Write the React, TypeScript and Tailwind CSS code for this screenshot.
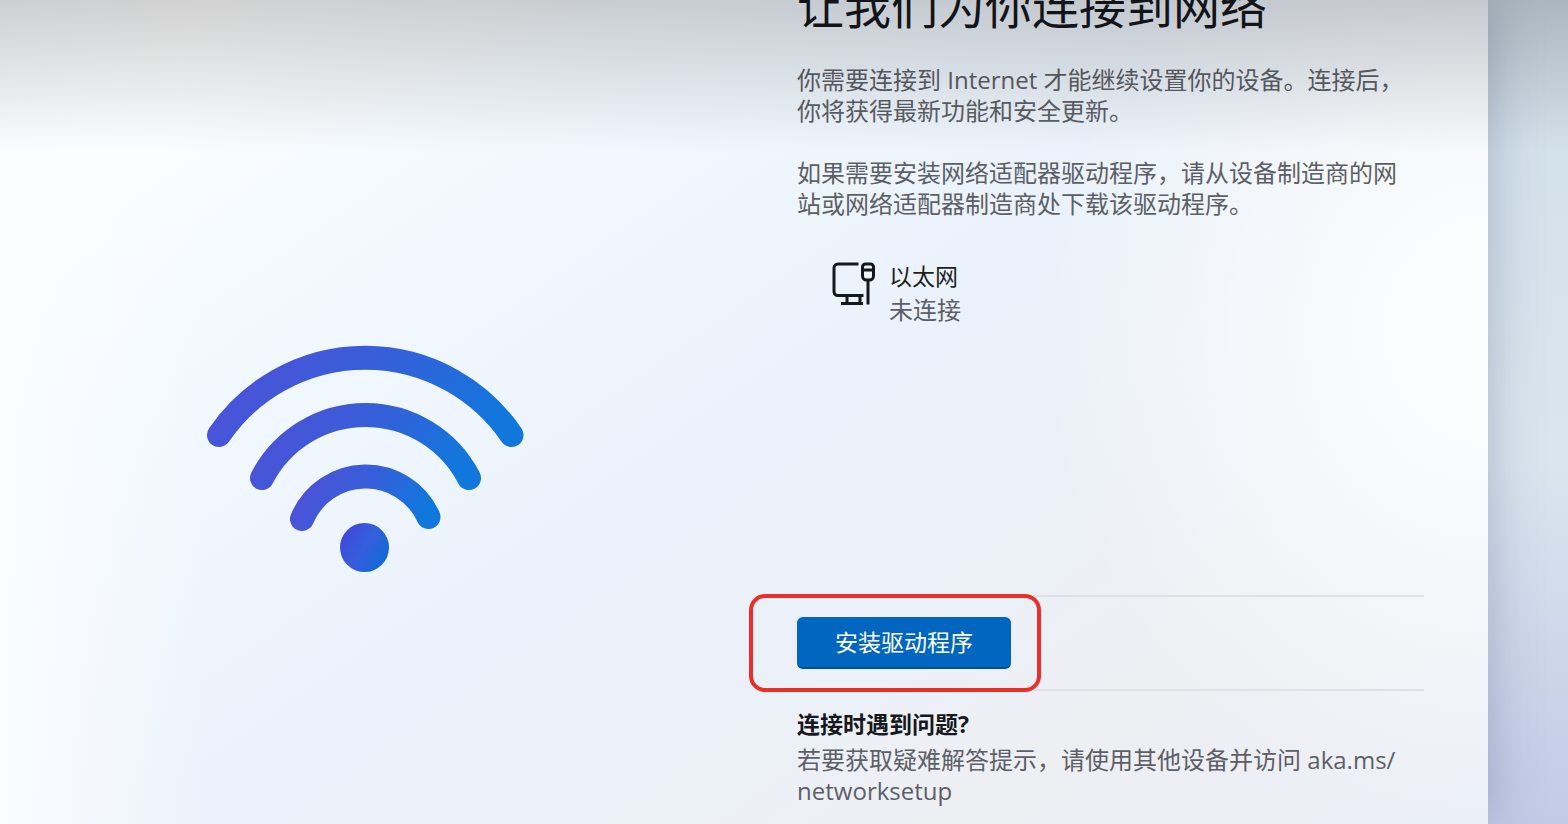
import React from "react";

const WifiLogo: React.FC = () => (
    <svg className="w-80" viewBox="205 345 320 228" fill="none" aria-hidden="true">
        <defs>
            <linearGradient id="arc" x1="0" y1="0.4" x2="1" y2="0.6">
                <stop offset="0" stopColor="#4c52d8" />
                <stop offset="0.5" stopColor="#3460da" />
                <stop offset="1" stopColor="#1077dc" />
            </linearGradient>
            <linearGradient id="dot" x1="0" y1="0.2" x2="1" y2="0.8">
                <stop offset="0" stopColor="#3f48d8" />
                <stop offset="0.5" stopColor="#355edb" />
                <stop offset="1" stopColor="#0a6cd8" />
            </linearGradient>
        </defs>
        <g stroke="url(#arc)" strokeWidth="24" strokeLinecap="round">
            <path d="M219 435A177 177 0 0 1 511.500 435" />
            <path d="M262 478A116.500 116.500 0 0 1 469 478" />
            <path d="M302 519A69 69 0 0 1 428.500 517" />
        </g>
        <circle cx="364.500" cy="547.500" r="24.500" fill="url(#dot)" />
    </svg>
);

const EthernetIcon: React.FC = () => (
    <svg className="size-[46px] shrink-0" viewBox="0 0 46 46" fill="none" stroke="#14171c" strokeWidth="3" aria-hidden="true">
        <path d="M27.500 4H7a4 4 0 0 0-4 4V31.500a4 4 0 0 0 4 4H32.500" />
        <path d="M16 35.500v8M29 35.500v8M10 43.500H32" />
        <path d="M31.500 7a3 3 0 0 1 3-3h5a3 3 0 0 1 3 3v9a4 4 0 0 1-4 4h-3a4 4 0 0 1-4-4z" />
        <path d="M31.500 10h11M37 20V44.500" />
    </svg>
);

const App: React.FC = () => {
    return (
        <div className="relative flex min-h-screen overflow-hidden bg-gradient-to-b from-[#d0dfe9] via-[#dae6ef] via-55% to-[#c2cae6] pr-20 font-['Open_Sans','Noto_Sans_CJK_SC',sans-serif] text-2xl/[31px] text-[#5c6066]">
            <main className="grid flex-1 grid-cols-[49fr_51fr] bg-[radial-gradient(ellipse_30%_60%_at_100%_40%,#fafcfd_20%,transparent),linear-gradient(to_right,#fafcff,transparent_14%),linear-gradient(145deg,#ffffff_8%,#f2f9ff_26%,#ebf2fb_50%,#ecf0f7_70%,#eeeff3_80%,#ebeff8)] shadow-[0_0_48px_rgba(70,90,120,0.35)]">
                <div className="flex items-center justify-center pt-[94px]">
                    <WifiLogo />
                </div>

                <section className="-mt-6 flex flex-col pr-16 pb-[18px] pl-17">
                    <h1 className="text-[47px]/[60px] text-[#16181c]">让我们为你连接到网络</h1>
                    <p className="mt-7 pr-3">你需要连接到 Internet 才能继续设置你的设备。连接后，你将获得最新功能和安全更新。</p>
                    <p className="mt-[31px] pr-3">如果需要安装网络适配器驱动程序，请从设备制造商的网站或网络适配器制造商处下载该驱动程序。</p>

                    <div className="mt-[41px] flex gap-3 pl-[34px]">
                        <EthernetIcon />
                        <div>
                            <h2 className="text-[23px]/[33px] text-[#1c1f24]">以太网</h2>
                            <p className="leading-[33px]">未连接</p>
                        </div>
                    </div>

                    <div className="mt-auto border-y-2 border-[#dfe1e7] py-5">
                        <div className="relative w-fit">
                            <button
                                type="button"
                                className="h-[52px] w-[214px] rounded-md border-b-2 border-[#00509f] bg-[#0066c0] text-[23px] text-white"
                            >
                                安装驱动程序
                            </button>
                            <div className="pointer-events-none absolute -inset-y-[23px] -right-[30px] -left-12 rounded-2xl border-4 border-[#ea2f28]" />
                        </div>
                    </div>

                    <h2 className="mt-[18px] text-[23px] font-bold text-[#16181c]">连接时遇到问题?</h2>
                    <p className="mt-1">
                        若要获取疑难解答提示，请使用其他设备并访问 aka.ms/<wbr />networksetup
                    </p>
                </section>
            </main>

            {/* Top shade */}
            <div className="pointer-events-none absolute inset-x-0 top-0 h-38 bg-gradient-to-b from-black/18 via-black/9 to-transparent" />
        </div>
    );
};

export default App;
